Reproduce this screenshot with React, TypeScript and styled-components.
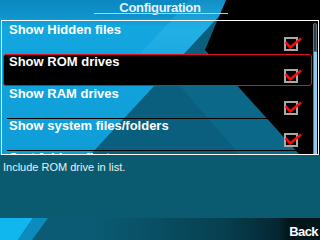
import React from "react";
import styled, { createGlobalStyle, css } from "styled-components";

const GlobalStyle = createGlobalStyle`
  html, body { margin: 0; padding: 0; background: #000; }
  body {
    width: 320px;
    height: 240px;
    overflow: hidden;
    font-family: "Liberation Sans", Arial, sans-serif;
  }
  * { box-sizing: border-box; }
`;

const svgUrl = (svg: string) =>
  `url("data:image/svg+xml;utf8,${encodeURIComponent(svg)}")`;

const mainWallpaper = svgUrl(`<svg xmlns='http://www.w3.org/2000/svg' width='320' height='155' viewBox='0 0 320 155'>
<defs>
<linearGradient id='b' x1='0' y1='0' x2='0' y2='155' gradientUnits='userSpaceOnUse'>
<stop offset='0' stop-color='#0b88bf'/>
<stop offset='0.11' stop-color='#0e94cd'/>
<stop offset='0.17' stop-color='#13a6df'/>
<stop offset='1' stop-color='#0f9dd7'/>
</linearGradient>
<linearGradient id='l' x1='0' y1='0' x2='0' y2='90' gradientUnits='userSpaceOnUse'>
<stop offset='0' stop-color='#3cc2f2' stop-opacity='0.15'/>
<stop offset='0.35' stop-color='#3cc2f2' stop-opacity='0.35'/>
<stop offset='1' stop-color='#3cc2f2' stop-opacity='0'/>
</linearGradient>
</defs>
<rect width='320' height='155' fill='#0a5f7e'/>
<polygon points='0,0 234,0 90,155 0,155' fill='url(#b)'/>
<polygon points='190,0 234,0 150,90 106,90' fill='url(#l)'/>
<polygon points='205,50 300,155 240,155 180,86' fill='#0c7092' opacity='0.55'/>
<polygon points='226,0 320,0 320,155 300,155 205,50' fill='#000'/>
</svg>`);

const barWallpaper = svgUrl(`<svg xmlns='http://www.w3.org/2000/svg' width='320' height='22' viewBox='0 0 320 22'>
<defs>
<linearGradient id='t' x1='0' y1='0' x2='320' y2='0' gradientUnits='userSpaceOnUse'>
<stop offset='0.3' stop-color='#0a5b73'/>
<stop offset='0.7' stop-color='#07404f'/>
<stop offset='0.87' stop-color='#042631'/>
<stop offset='0.9' stop-color='#03161c'/>
</linearGradient>
</defs>
<rect x='0' y='0' width='320' height='22' fill='url(#t)'/>
<polygon points='0,0 33,0 18,22 0,22' fill='#10b6ee'/>
<polygon points='33,0 48,0 32,22 18,22' fill='#0b8cbd'/>
</svg>`);

const Screen = styled.div`
  width: 320px;
  height: 240px;
  display: flex;
  flex-direction: column;
  overflow: hidden;
  background: #0a5a70;
`;

const MainPane = styled.div`
  flex: none;
  height: 155px;
  display: flex;
  flex-direction: column;
  background-image: ${mainWallpaper};
  background-repeat: no-repeat;
`;

const TitleBar = styled.div`
  height: 20px;
  display: flex;
  justify-content: center;
  padding-top: 1px;
`;

const TitleText = styled.h1`
  position: relative;
  margin: 0;
  font: bold 13px/13px "Liberation Sans", Arial, sans-serif;
  letter-spacing: -0.3px;
  color: #e6f3fa;

  &::after {
    content: "";
    position: absolute;
    left: 50%;
    top: 12px;
    width: 134px;
    height: 1px;
    margin-left: -66px;
    background: #b4d0de;
  }
`;

const ListFrame = styled.div`
  height: 135px;
  margin: 0 1px;
  border: 1px solid #ffffff;
  display: flex;
`;

const ListColumn = styled.div`
  flex: 1;
  display: flex;
  flex-direction: column;
  overflow: hidden;
`;

const ScrollTrack = styled.div`
  width: 4px;
  margin: 2px 1px 0 1px;
  display: flex;
  flex-direction: column;
`;

const ScrollRail = styled.div`
  height: 29px;
  border-radius: 2px 2px 0 0;
  background: #2e3d46;
  border: 1px solid #5d7684;
`;

const ScrollThumb = styled.div`
  flex: 1;
  background: #8ecbea;
  border-left: 1px solid #4f8099;
`;

const Row = styled.div<{ $selected?: boolean; $divider?: boolean }>`
  position: relative;
  flex: none;
  height: 32px;
  padding: 2px 0 0 7px;
  display: flex;
  flex-direction: column;

  ${(p) =>
    p.$divider &&
    css`
      &::after {
        content: "";
        position: absolute;
        left: 5px;
        right: 2px;
        top: 1px;
        height: 1px;
        background: #000;
      }
    `}

  ${(p) =>
    p.$selected &&
    css`
      &::before {
        content: "";
        position: absolute;
        left: 1px;
        right: 0;
        top: 1px;
        bottom: -1px;
        border: 1px solid #e3101c;
        border-radius: 3px;
        background: #000;
      }
    `}
`;

const Label = styled.span`
  position: relative;
  font: bold 13px/13px "Liberation Sans", Arial, sans-serif;
  color: #ffffff;
  white-space: nowrap;
`;

const CheckIcon = styled.svg`
  position: relative;
  align-self: flex-end;
  margin-top: 1px;
  margin-right: 10px;
  flex: none;
`;

const Description = styled.div`
  flex: none;
  height: 63px;
  padding: 6px 0 0 3px;
  background: #0a5a70;
  font: 11px/13px "Liberation Sans", Arial, sans-serif;
  color: #e8f3f7;
`;

const SoftkeyBar = styled.div`
  flex: none;
  height: 22px;
  display: flex;
  justify-content: flex-end;
  padding: 7px 2px 0 0;
  background-color: #0a5b73;
  background-image: ${barWallpaper};
  background-size: 320px 22px;
  background-repeat: no-repeat;
`;

const SoftkeyLabel = styled.span`
  font: bold 13px/13px "Liberation Sans", Arial, sans-serif;
  letter-spacing: -0.6px;
  color: #ffffff;
`;

const Checkbox = () => (
  <CheckIcon width="18" height="15" viewBox="0 0 18 15">
    <rect x="1" y="1" width="12" height="12" fill="#000" stroke="#a9a9a9" strokeWidth="2" />
    <path
      d="M2.5 6.2 L6.2 10.4 L16 2.4"
      fill="none"
      stroke="#ee1111"
      strokeWidth="2.6"
      strokeLinecap="square"
      strokeLinejoin="miter"
    />
  </CheckIcon>
);

const items = [
  { label: "Show Hidden files", checked: true },
  { label: "Show ROM drives", checked: true },
  { label: "Show RAM drives", checked: true },
  { label: "Show system files/folders", checked: true },
  { label: "Sort folders first", checked: true },
];

const selectedIndex = 1;

export default function App() {
  return (
    <>
      <GlobalStyle />
      <Screen>
        <MainPane>
          <TitleBar>
            <TitleText>Configuration</TitleText>
          </TitleBar>
          <ListFrame>
            <ListColumn>
              {items.map((item, i) => (
                <Row
                  key={item.label}
                  $selected={i === selectedIndex}
                  $divider={i > 0 && i !== selectedIndex && i - 1 !== selectedIndex}
                >
                  <Label>{item.label}</Label>
                  {item.checked && <Checkbox />}
                </Row>
              ))}
            </ListColumn>
            <ScrollTrack>
              <ScrollRail />
              <ScrollThumb />
            </ScrollTrack>
          </ListFrame>
        </MainPane>
        <Description>Include ROM drive in list.</Description>
        <SoftkeyBar>
          <SoftkeyLabel>Back</SoftkeyLabel>
        </SoftkeyBar>
      </Screen>
    </>
  );
}
